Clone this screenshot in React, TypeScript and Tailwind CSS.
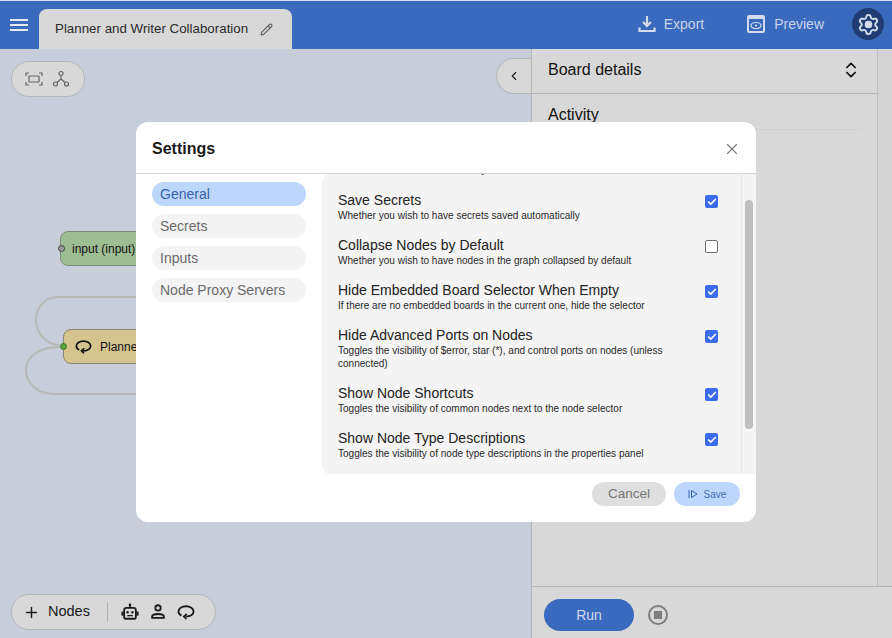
import { Pencil, Settings, X, ChevronLeft, ChevronsUpDown, Plus, Check } from "lucide-react"

const FONT = "font-['Liberation_Sans',Arial,sans-serif]"

const settings = [
  { title: "Save Secrets", desc: "Whether you wish to have secrets saved automatically", checked: true },
  { title: "Collapse Nodes by Default", desc: "Whether you wish to have nodes in the graph collapsed by default", checked: false },
  { title: "Hide Embedded Board Selector When Empty", desc: "If there are no embedded boards in the current one, hide the selector", checked: true },
  { title: "Hide Advanced Ports on Nodes", desc: "Toggles the visibility of $error, star (*), and control ports on nodes (unless connected)", checked: true },
  { title: "Show Node Shortcuts", desc: "Toggles the visibility of common nodes next to the node selector", checked: true },
  { title: "Show Node Type Descriptions", desc: "Toggles the visibility of node type descriptions in the properties panel", checked: true },
]

function LoopIcon({ className }: { className?: string }) {
  return (
    <svg viewBox="0 0 20 20" className={className} fill="none" stroke="currentColor" strokeWidth="2">
      <path d="M5 14C2.800 13 1.600 11.400 1.600 9.500 1.600 6 5.400 3.600 10 3.600s8.400 2.400 8.400 5.900c0 3.300-3.400 5.500-9 5.700" />
      <path d="M10.800 12l-3.300 3.100 3 3" strokeWidth="1.800" />
    </svg>
  )
}

function RobotIcon() {
  return (
    <svg viewBox="0 0 20 20" className="h-[18px] w-[18px]" fill="none" stroke="#1a1a1a" strokeWidth="2">
      <path d="M6 5.500h8a2.500 2.500 0 0 1 2.500 2.500v8a1.500 1.500 0 0 1-1.500 1.500H5A1.500 1.500 0 0 1 3.500 16V8A2.500 2.500 0 0 1 6 5.500z" />
      <rect x="0.500" y="9.500" width="2.500" height="4.500" fill="#1a1a1a" stroke="none" />
      <rect x="17" y="9.500" width="2.500" height="4.500" fill="#1a1a1a" stroke="none" />
      <path d="M10 5V2.500" />
      <circle cx="10" cy="2" r="1.500" fill="#1a1a1a" stroke="none" />
      <circle cx="7.300" cy="10.300" r="1.300" fill="#1a1a1a" stroke="none" />
      <circle cx="12.700" cy="10.300" r="1.300" fill="#1a1a1a" stroke="none" />
      <path d="M7 14h6" strokeWidth="1.500" />
    </svg>
  )
}

function PersonIcon() {
  return (
    <svg viewBox="0 0 20 20" className="h-[18px] w-[18px]" fill="none" stroke="#1a1a1a" strokeWidth="2">
      <circle cx="10" cy="5.500" r="3" />
      <path d="M3.400 16.500v-1.200c0-2 3.300-3.100 6.600-3.100s6.600 1.100 6.600 3.100v1.200z" />
    </svg>
  )
}

function Row({ title, desc, checked }: { title: string; desc: string; checked: boolean }) {
  return (
    <div className="flex items-start justify-between pr-[23px]">
      <div className="w-[340px]">
        <div className="text-[14px] leading-[16px] text-[#222]">{title}</div>
        <div className="mt-[1px] text-[10.060px] leading-[13px] text-[#2a2a2a]">{desc}</div>
      </div>
      <div
        className={
          checked
            ? "mt-[3px] flex h-[13px] w-[13px] items-center justify-center rounded-[2px] bg-[#3b6cf0]"
            : "mt-[3px] h-[13px] w-[13px] rounded-[2px] border border-[#6f6f6f] bg-white"
        }
      >
        {checked && <Check className="h-[10px] w-[10px] text-white" strokeWidth={4} />}
      </div>
    </div>
  )
}

function SettingsDialog() {
  const nav = ["General", "Secrets", "Inputs", "Node Proxy Servers"]
  return (
    <div className="absolute left-[136px] top-[122px] h-[400px] w-[620px] overflow-hidden rounded-[12px] bg-white">
      <div className="flex h-[52px] items-center justify-between border-b border-[#d4d4d4] pl-4 pr-[15px] pt-[2px]">
        <span className="text-[16px] font-bold text-[#1a1a1a]">Settings</span>
        <X className="h-[18px] w-[18px] text-[#7a7a7a]" strokeWidth={1.5} />
      </div>
      <div className="flex h-[300px]">
        <div className="flex w-[186px] shrink-0 flex-col gap-2 px-4 pt-2">
          {nav.map((item, i) => (
            <div
              key={item}
              className={
                i === 0
                  ? "h-6 rounded-full bg-[#bcd7fb] pl-2 text-[14px] leading-6 text-[#3a62ad]"
                  : "h-6 rounded-full bg-[#f4f4f4] pl-2 text-[14px] leading-6 text-[#6a6a6a]"
              }
            >
              {item}
            </div>
          ))}
        </div>
        <div className="relative flex-1 overflow-hidden rounded-l-[8px] bg-[#f4f4f4]">
          {/* tail of the row scrolled out above the panel */}
          <span className="absolute left-[159px] top-0 h-px w-[3px] bg-[#8a8a8a]" />
          <div className="flex h-full">
            <div className="flex flex-1 flex-col gap-[15px] pl-4 pt-[18px]">
              {settings.map((s) => (
                <Row key={s.title} {...s} />
              ))}
            </div>
            <div className="w-[15px] shrink-0 border-l border-[#e6e6e6] pl-[3px] pt-[26px]">
              <div className="h-[229px] w-[8px] rounded-full bg-[#bfbfbf]" />
            </div>
          </div>
        </div>
      </div>
      <div className="flex justify-end gap-2 pr-4 pt-2">
        <div className="flex h-6 w-[74px] items-center justify-center rounded-full bg-[#dfdfdf] pt-px text-[13.500px] text-[#777]">Cancel</div>
        <div className="flex h-6 w-[66px] items-center justify-center gap-[6px] rounded-full bg-[#bcd7fb] text-[10px] text-[#4a6fb5]">
          <svg viewBox="0 0 10 10" className="h-[10px] w-[10px]" fill="none" stroke="#3a62ad" strokeWidth="1">
            <path d="M1 1v8M3.500 1.500v7L9 5z" />
          </svg>
          Save
        </div>
      </div>
    </div>
  )
}

export default function App() {
  return (
    <div className={`relative flex h-[638px] w-[892px] flex-col overflow-hidden bg-[#d8d8d8] ${FONT}`}>
      <header className="flex h-[49px] shrink-0 items-end border-t border-[#dfe4ec] bg-[#3a6abd] pr-[8px]">
        <div className="flex h-full w-[39px] flex-col items-center justify-center gap-[3px] pr-[1px]">
          <span className="h-[2px] w-[18px] bg-[#e3e8f2]" />
          <span className="h-[2px] w-[18px] bg-[#e3e8f2]" />
          <span className="h-[2px] w-[18px] bg-[#e3e8f2]" />
        </div>
        <div className="flex h-10 w-[253px] items-center rounded-t-[8px] bg-[#d8d8d8] pl-4 text-[13.330px] text-[#2b2b2b]">
          <span>Planner and Writer Collaboration</span>
          <Pencil className="ml-[12px] h-[13px] w-[13px] text-[#555]" strokeWidth={2} />
        </div>
        <div className="flex h-full flex-1 items-center justify-end pb-[2px] text-[14px] text-[#c9d4e8]">
          <svg viewBox="0 0 18 18" className="h-[18px] w-[18px]" fill="none" stroke="#d3dcec" strokeWidth="2.200">
            <path d="M9 1v10M5 7l4 4 4-4M1.500 12.500v3.500h15v-3.500" />
          </svg>
          <span className="ml-2">Export</span>
          <svg viewBox="0 0 18 18" className="ml-[43px] h-[18px] w-[18px]" fill="none" stroke="#d3dcec" strokeWidth="2">
            <rect x="1" y="1" width="16" height="16" rx="1" />
            <path d="M1 2.500h16" strokeWidth="3" />
            <ellipse cx="9" cy="10.500" rx="5" ry="3" strokeWidth="1.200" />
            <circle cx="9" cy="10.500" r="1.100" fill="#d3dcec" stroke="none" />
          </svg>
          <span className="ml-[9px]">Preview</span>
          <div className="relative ml-[28px] flex h-8 w-8 items-center justify-center rounded-full bg-[#1f3d73]">
            <Settings className="h-[23px] w-[23px] text-[#d3dcec]" strokeWidth={2} />
            <span className="absolute h-[7px] w-[7px] rounded-full bg-[#d3dcec]" />
          </div>
        </div>
      </header>

      <div className="flex min-h-0 flex-1">
        <main className="relative w-[531px] shrink-0 overflow-hidden bg-[#c7ced9]">
          <div className="absolute left-[11px] top-[12px] flex h-9 w-[74px] items-center gap-[9px] rounded-full border border-[#b5b7b9] bg-[#d8d8d8] pl-[13px] text-[#666]">
            <svg viewBox="0 0 18 14" className="h-[14px] w-[18px]" fill="none" stroke="currentColor" strokeWidth="1.200">
              <path d="M1 4V1h3M14 1h3v3M1 10v3h3M14 13h3v-3" />
              <rect x="4" y="4" width="10" height="6" rx="0.500" />
            </svg>
            <svg viewBox="0 0 18 18" className="h-[18px] w-[18px]" fill="none" stroke="currentColor" strokeWidth="1.200">
              <circle cx="9" cy="3.500" r="2" />
              <circle cx="3.500" cy="14" r="2" />
              <circle cx="14.500" cy="14" r="2" />
              <path d="M9 5.500v3.500M9 9l-4 3.500M9 9l4 3.500" />
            </svg>
          </div>

          <div className="absolute right-0 top-[9px] flex h-9 w-[35px] items-center justify-center rounded-l-full border border-r-0 border-[#b5b7b9] bg-[#d8d8d8]">
            <ChevronLeft className="h-[14px] w-[14px] text-[#222]" strokeWidth={2} />
          </div>

          <svg className="absolute left-0 top-[-49px] h-[638px] w-full" fill="none" stroke="#b9b9b5" strokeWidth="2">
            <path d="M160 297H58C44 297 36 308 36 320C36 334 46 344 60 345.500" />
            <path d="M60 347C40 347 26 356 26 370C26 384 38 394 54 394H160" />
          </svg>

          <div className="absolute left-[60px] top-[182px] flex h-[35px] w-[120px] items-center rounded-[8px] border border-[#7f8a7b] bg-[#9dbe92] pl-[11px] text-[12px] text-[#111]">
            input (input)
          </div>
          <div className="absolute left-[58px] top-[196px] h-[7px] w-[7px] rounded-full border border-[#444] bg-[#9a9a9a]" />

          <div className="absolute left-[63px] top-[280px] flex h-[35px] w-[120px] items-center rounded-[8px] border border-[#8a8470] bg-[#d5c48e] pl-[11px] text-[12px] text-[#111]">
            <LoopIcon className="h-[17px] w-[17px] text-[#111]" />
            <span className="ml-[8px]">Planner</span>
          </div>
          <div className="absolute left-[60px] top-[294px] h-[7px] w-[7px] rounded-full border border-[#3e7a2a] bg-[#5aa33a]" />

          <div className="absolute bottom-[8px] left-[11px] flex h-9 w-[205px] items-center rounded-full border border-[#b5b7b9] bg-[#d8d8d8] pl-[11px] text-[14.500px] text-[#1a1a1a]">
            <Plus className="h-[17px] w-[17px]" strokeWidth={2} />
            <span className="ml-[8px]">Nodes</span>
            <span className="ml-[17px] h-5 w-px bg-[#b0b0b0]" />
            <span className="ml-[13px] flex items-center gap-[10px]">
              <RobotIcon />
              <PersonIcon />
              <LoopIcon className="h-[18px] w-[18px] text-[#1a1a1a]" />
            </span>
          </div>
        </main>

        <aside className="flex min-w-0 flex-1 flex-col border-l border-[#b5b5b5]">
          <div className="flex min-h-0 flex-1">
            <div className="w-[346px] shrink-0 border-r border-[#c0c0c0]">
              <div className="flex h-[45px] items-center justify-between border-b border-[#b5b5b5] pb-[2px] pl-4 pr-[16px] text-[16px] text-[#111]">
                Board details
                <ChevronsUpDown className="h-[20px] w-[20px]" strokeWidth={2} />
              </div>
              <div className="mx-4 h-[36px] border-b border-[#cfcfcf] pt-[12px] text-[16px] leading-[18px] text-[#111]">Activity</div>
            </div>
            <div className="flex-1 bg-[#d4d4d4]" />
          </div>
          <div className="flex h-[52px] shrink-0 items-start border-t border-[#b5b5b5] pl-[12px] pt-[12px]">
            <div className="flex h-8 w-[90px] items-center justify-center rounded-full bg-[#3a6abd] text-[14px] text-[#d3dcec]">Run</div>
            <div className="ml-[14px] mt-[6px] flex h-5 w-5 items-center justify-center rounded-full border-2 border-[#7d7d7d]">
              <span className="h-2 w-2 bg-[#7d7d7d]" />
            </div>
          </div>
        </aside>
      </div>

      <SettingsDialog />
    </div>
  )
}
